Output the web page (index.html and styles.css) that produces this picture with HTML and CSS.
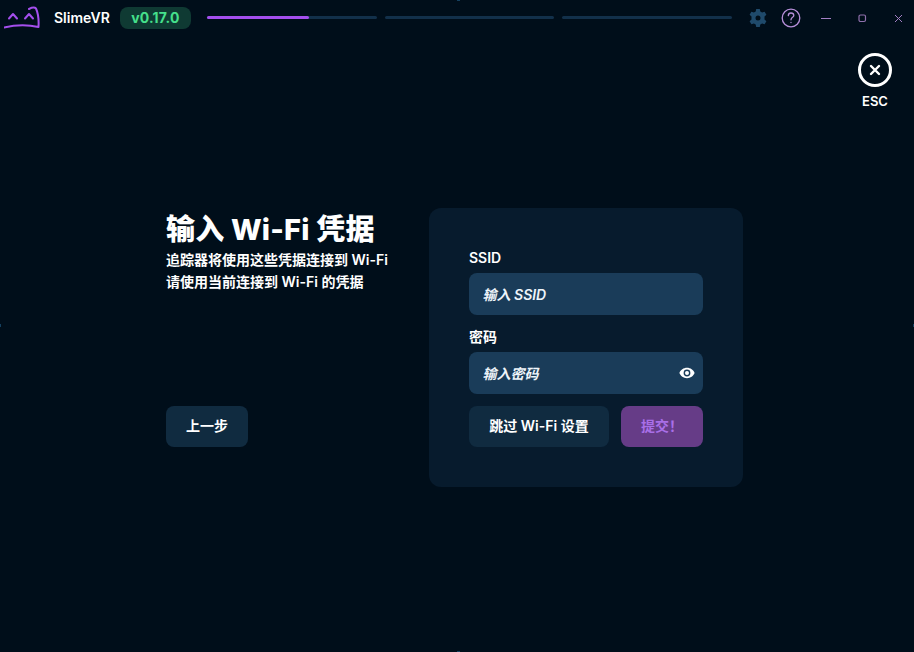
FILE: index.html
```html
<!DOCTYPE html>
<html lang="zh-CN">
  <head>
    <meta charset="UTF-8" />
    <title>SlimeVR</title>
    <link rel="stylesheet" href="styles.css">
  </head>
  <body>
    <!-- Resize handles at the window edges -->
    <span class="handle handle-top"></span>
    <span class="handle handle-bottom"></span>
    <span class="handle handle-left"></span>
    <span class="handle handle-right"></span>

    <header class="titlebar">
      <svg class="logo" width="40" height="30" viewBox="0 0 40 30" fill="none" stroke="#a44fed" stroke-width="2" stroke-linecap="round" stroke-linejoin="round">
        <path d="M5 15.500 L9 11 L13 15.500" />
        <path d="M21 15.500 L25 11 L29 15.500" />
        <path d="M25 6 C28 4.500 31 4.500 32 5.500 C34 10 35 16 34.500 24 C24 21.500 10 22 0 24.500" />
      </svg>
      <span class="app-name">SlimeVR</span>
      <span class="version">v0.17.0</span>
      <div class="progress">
        <div class="progress-track"><div class="progress-fill" style="width: 60%"></div></div>
        <div class="progress-track"></div>
        <div class="progress-track"></div>
      </div>
      <svg class="gear" width="20" height="20" viewBox="0 0 20 20">
        <path fill="#1f4a6b" fill-rule="evenodd" d="M8.200 1 H11.800 L12.300 3.500 L14.100 4.500 L16.600 3.700 L18.400 6.800 L16.500 8.500 V11.500 L18.400 13.200 L16.600 16.300 L14.100 15.500 L12.300 16.500 L11.800 19 H8.200 L7.700 16.500 L5.900 15.500 L3.400 16.300 L1.600 13.200 L3.500 11.500 V8.500 L1.600 6.800 L3.400 3.700 L5.900 4.500 L7.700 3.500 Z M10 7.500 A2.500 2.500 0 1 0 10 12.500 A2.500 2.500 0 1 0 10 7.500 Z" />
      </svg>
      <svg class="help" width="20" height="20" viewBox="0 0 20 20" fill="none" stroke="#b68fd9" stroke-width="1.300" stroke-linecap="round">
        <circle cx="10" cy="10" r="8.800" />
        <path d="M7.300 7.600 C7.400 5.900 8.600 5 10 5 C11.600 5 12.800 6 12.800 7.400 C12.800 9.300 10 9.500 10 11.800" />
        <path d="M10 14.500 V14.600" />
      </svg>
      <div class="window-controls">
        <svg width="10" height="10" viewBox="0 0 10 10" fill="none" stroke="#a37fc4" stroke-width="1"><path d="M0 5.500 H10" /></svg>
        <svg width="10" height="10" viewBox="0 0 10 10" fill="none" stroke="#8f70ad" stroke-width="1.200"><rect x="2" y="2" width="6.500" height="6.500" rx="1.500" /></svg>
        <svg width="10" height="10" viewBox="0 0 10 10" fill="none" stroke="#a37fc4" stroke-width="1"><path d="M2 2 L9 9 M9 2 L2 9" /></svg>
      </div>
    </header>

    <button class="esc" type="button">
      <span class="esc-circle">
        <svg width="12" height="12" viewBox="0 0 12 12" fill="none" stroke="#fff" stroke-width="2.400" stroke-linecap="round"><path d="M2 2 L10 10 M10 2 L2 10" /></svg>
      </span>
      <span class="esc-label">ESC</span>
    </button>

    <main class="main">
      <section class="intro">
        <div>
          <h1>输入 Wi-Fi 凭据</h1>
          <p>追踪器将使用这些凭据连接到 Wi-Fi</p>
          <p>请使用当前连接到 Wi-Fi 的凭据</p>
        </div>
        <button class="btn btn-dark" type="button">上一步</button>
      </section>

      <form class="card" onsubmit="return false;">
        <label class="field-label" for="ssid">SSID</label>
        <div class="field">
          <input id="ssid" type="text" placeholder="输入 SSID" />
        </div>
        <label class="field-label" for="password">密码</label>
        <div class="field">
          <input id="password" type="password" placeholder="输入密码" />
          <svg class="eye" width="16" height="12" viewBox="0 0 16 12">
            <path fill="#fff" fill-rule="evenodd" d="M8 .8 C11.500 .8 14.400 3 15.600 6 C14.400 9 11.500 11.200 8 11.200 C4.500 11.200 1.600 9 .4 6 C1.600 3 4.500 .8 8 .8 Z M8 2.600 A3.400 3.400 0 1 0 8 9.400 A3.400 3.400 0 1 0 8 2.600 Z M8 4 A2 2 0 1 1 8 8 A2 2 0 1 1 8 4 Z" />
          </svg>
        </div>
        <div class="actions">
          <button class="btn btn-dark btn-skip" type="button">跳过 Wi-Fi 设置</button>
          <button class="btn btn-submit" type="submit">提交！</button>
        </div>
      </form>
    </main>
  </body>
</html>
```

FILE: styles.css
```css
* {
  margin: 0;
  padding: 0;
  box-sizing: border-box;
}

body {
  position: relative;
  width: 914px;
  height: 652px;
  overflow: hidden;
  background: #000e1a;
  color: #fff;
  font-family: "Inter", "Noto Sans CJK SC", sans-serif;
  display: flex;
  flex-direction: column;
}

.handle {
  position: absolute;
  background: #14405f;
}

.handle-top {
  top: 0;
  left: 457px;
  width: 3px;
  height: 1px;
}

.handle-bottom {
  bottom: 0;
  left: 457px;
  width: 3px;
  height: 1px;
}

.handle-left {
  top: 324px;
  left: 0;
  width: 1px;
  height: 3px;
}

.handle-right {
  top: 324px;
  right: 0;
  width: 1px;
  height: 3px;
}

/* Top bar */
.titlebar {
  height: 35px;
  display: flex;
  align-items: center;
  padding-left: 4px;
}

.app-name {
  margin-left: 10px;
  font-size: 14px;
  font-weight: 600;
}

.version {
  margin-left: 10px;
  width: 71px;
  height: 22px;
  border-radius: 8px;
  background: #0f3a33;
  color: #45e08c;
  font-size: 14px;
  font-weight: 700;
  letter-spacing: 0.2px;
  line-height: 22px;
  text-align: center;
}

.progress {
  margin-left: 16px;
  width: 525px;
  display: flex;
  gap: 8px;
}

.progress-track {
  flex: 1;
  height: 3px;
  border-radius: 2px;
  background: #12304a;
}

.progress-fill {
  height: 100%;
  border-radius: 2px;
  background: #a44fed;
}

.gear {
  margin-left: 16px;
}

.help {
  margin-left: 13px;
}

.window-controls {
  margin-left: 20px;
  display: flex;
  gap: 26px;
}

/* Close overlay */
.esc {
  position: absolute;
  top: 53px;
  right: 22px;
  background: none;
  border: none;
  color: #fff;
  font-family: inherit;
  display: flex;
  flex-direction: column;
  align-items: center;
  gap: 6px;
}

.esc-circle {
  width: 34px;
  height: 34px;
  border: 3px solid #fff;
  border-radius: 50%;
  display: flex;
  align-items: center;
  justify-content: center;
}

.esc-label {
  font-size: 13px;
  font-weight: 600;
}

/* Main content */
.main {
  margin-top: 173px;
  margin-left: 166px;
  display: flex;
}

.intro {
  width: 263px;
  padding: 4px 0 40px;
  display: flex;
  flex-direction: column;
  justify-content: space-between;
  align-items: flex-start;
}

.intro h1 {
  font-size: 29px;
  font-weight: 800;
  letter-spacing: 0.2px;
  line-height: 36px;
  margin-bottom: 1px;
}

.intro p {
  font-size: 14px;
  font-weight: 600;
  line-height: 22px;
}

.card {
  width: 314px;
  height: 279px;
  padding: 40px;
  border-radius: 12px;
  background: #071b2d;
  display: flex;
  flex-direction: column;
}

.field-label {
  font-size: 14px;
  font-weight: 600;
  line-height: 20px;
  margin-bottom: 5px;
}

.field {
  position: relative;
  height: 42px;
  margin-bottom: 12px;
}

.field input {
  width: 100%;
  height: 100%;
  padding: 0 14px 0 13.500px;
  border: none;
  border-radius: 8px;
  background: #1a3c59;
  color: #fff;
  font-family: inherit;
  font-size: 14px;
  font-weight: 600;
  font-style: italic;
}

.field input::placeholder {
  color: #eef4fa;
  opacity: 1;
}

.eye {
  position: absolute;
  right: 8px;
  top: 15px;
}

.actions {
  display: flex;
  justify-content: space-between;
}

.btn {
  height: 41px;
  padding-bottom: 3px;
  border: none;
  border-radius: 8px;
  font-family: inherit;
  font-size: 14px;
  font-weight: 600;
  color: #fff;
}

.btn-dark {
  width: 82px;
  background: #102b40;
}

.btn-skip {
  width: 140px;
}

.btn-submit {
  width: 82px;
  background: #663c87;
  color: #a96fe8;
}
```
